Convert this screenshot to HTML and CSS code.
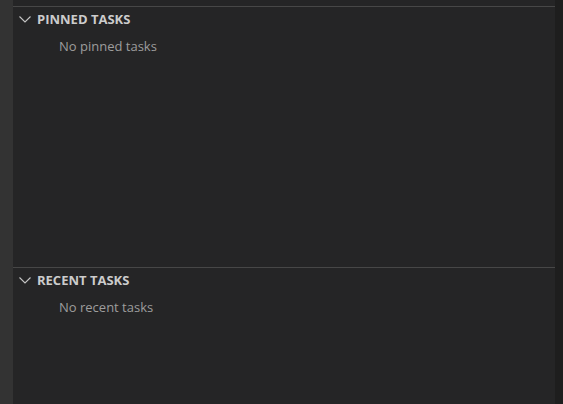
FILE: index.html
```html
<!DOCTYPE html>
<html>
<head>
<meta charset="utf-8">
<link rel="stylesheet" href="styles.css">
</head>
<body>
<div class="app">
  <div class="activity"></div>
  <div class="panel">
    <section class="pane pane-pinned">
      <div class="pane-header">
        <svg class="chevron" width="16" height="16" viewBox="0 0 16 16"><path d="M2.5 5.5 L8 11 L13.5 5.5" fill="none" stroke="#c5c5c5" stroke-width="1.1"/></svg>
        <span class="pane-title">PINNED TASKS</span>
      </div>
      <div class="pane-body">No pinned tasks</div>
    </section>
    <section class="pane pane-recent">
      <div class="pane-header">
        <svg class="chevron" width="16" height="16" viewBox="0 0 16 16"><path d="M2.5 5.5 L8 11 L13.5 5.5" fill="none" stroke="#c5c5c5" stroke-width="1.1"/></svg>
        <span class="pane-title">RECENT TASKS</span>
      </div>
      <div class="pane-body">No recent tasks</div>
    </section>
  </div>
  <div class="scroll-edge"></div>
</div>
</body>
</html>
```
FILE: styles.css
```css
html, body {
  margin: 0;
  padding: 0;
  height: 100%;
  background: #252526;
}
.app {
  display: flex;
  height: 404px;
  font-family: "Open Sans", "Noto Sans", sans-serif;
}
.activity {
  width: 13px;
  background: #333333;
}
.panel {
  flex: 1;
  display: flex;
  flex-direction: column;
  padding-top: 6px;
  background: #252526;
}
.scroll-edge {
  width: 8px;
  background: #1e1e1e;
}
.pane {
  border-top: 1px solid #474747;
  display: flex;
  flex-direction: column;
}
.pane-pinned {
  height: 260px;
}
.pane-recent {
  flex: 1;
}
.pane-header {
  height: 24px;
  display: flex;
  align-items: center;
  padding-left: 4px;
}
.chevron {
  margin-right: 4px;
  flex: none;
}
.pane-title {
  font-size: 13px;
  font-weight: 700;
  color: #cccccc;
  line-height: 16px;
}
.pane-body {
  padding-left: 46px;
  padding-top: 5px;
  font-size: 13px;
  color: #9d9d9d;
  line-height: 20px;
}
```
